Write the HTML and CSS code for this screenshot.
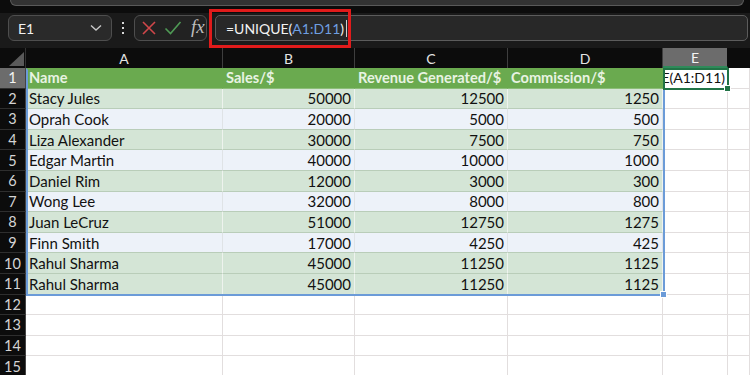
FILE: index.html
```html
<!DOCTYPE html>
<html lang="en">
	<head>
		<title>UNIQUE formula</title>
		<link rel="stylesheet" href="styles.css">
	</head>
	<body>
		<div class="title-strip">
			<div class="search-box"></div>
		</div>

		<div class="formula-bar">
			<div class="name-box">
				<span>E1</span>
				<svg width="12" height="8" viewBox="0 0 12 8"><path d="M1 1.5 L6 6 L11 1.5" fill="none" stroke="#c8c8c8" stroke-width="1.4"/></svg>
			</div>
			<div class="dots"><i></i><i></i><i></i></div>
			<div class="edit-tools">
				<svg width="16" height="16" viewBox="0 0 16 16"><path d="M2 2 L14 14 M14 2 L2 14" stroke="#d0474a" stroke-width="1.6"/></svg>
				<svg width="18" height="16" viewBox="0 0 18 16"><path d="M1.5 8.5 L6.5 13.5 L16.5 2" fill="none" stroke="#4f9a55" stroke-width="1.6"/></svg>
				<span class="fx">fx</span>
			</div>
			<div class="formula-input">
				<span>=UNIQUE(<b>A1:D11</b>)</span><i class="caret"></i>
			</div>
			<div class="callout"></div>
		</div>

		<div class="sheet">
			<div class="corner"><svg width="15" height="14" viewBox="0 0 15 14"><path d="M15 0 L15 14 L0 14 Z" fill="#5a5a5a"/></svg></div>
			<div class="col-head">A</div>
			<div class="col-head">B</div>
			<div class="col-head">C</div>
			<div class="col-head">D</div>
			<div class="col-head active">E</div>
			<div class="col-head last"></div>

			<div class="row-head active">1</div>
			<div class="cell th">Name</div>
			<div class="cell th">Sales/$</div>
			<div class="cell th">Revenue Generated/$</div>
			<div class="cell th">Commission/$</div>
			<div class="cell e1"><span>=UNIQUE(A1:D11)</span></div>
			<div class="cell"></div>

			<div class="row-head">2</div>
			<div class="cell band">Stacy Jules</div><div class="cell band num">50000</div><div class="cell band num">12500</div><div class="cell band num">1250</div><div class="cell"></div><div class="cell"></div>
			<div class="row-head">3</div>
			<div class="cell plain">Oprah Cook</div><div class="cell plain num">20000</div><div class="cell plain num">5000</div><div class="cell plain num">500</div><div class="cell"></div><div class="cell"></div>
			<div class="row-head">4</div>
			<div class="cell band">Liza Alexander</div><div class="cell band num">30000</div><div class="cell band num">7500</div><div class="cell band num">750</div><div class="cell"></div><div class="cell"></div>
			<div class="row-head">5</div>
			<div class="cell plain">Edgar Martin</div><div class="cell plain num">40000</div><div class="cell plain num">10000</div><div class="cell plain num">1000</div><div class="cell"></div><div class="cell"></div>
			<div class="row-head">6</div>
			<div class="cell band">Daniel Rim</div><div class="cell band num">12000</div><div class="cell band num">3000</div><div class="cell band num">300</div><div class="cell"></div><div class="cell"></div>
			<div class="row-head">7</div>
			<div class="cell plain">Wong Lee</div><div class="cell plain num">32000</div><div class="cell plain num">8000</div><div class="cell plain num">800</div><div class="cell"></div><div class="cell"></div>
			<div class="row-head">8</div>
			<div class="cell band">Juan LeCruz</div><div class="cell band num">51000</div><div class="cell band num">12750</div><div class="cell band num">1275</div><div class="cell"></div><div class="cell"></div>
			<div class="row-head">9</div>
			<div class="cell plain">Finn Smith</div><div class="cell plain num">17000</div><div class="cell plain num">4250</div><div class="cell plain num">425</div><div class="cell"></div><div class="cell"></div>
			<div class="row-head">10</div>
			<div class="cell band">Rahul Sharma</div><div class="cell band num">45000</div><div class="cell band num">11250</div><div class="cell band num">1125</div><div class="cell"></div><div class="cell"></div>
			<div class="row-head">11</div>
			<div class="cell band">Rahul Sharma</div><div class="cell band num">45000</div><div class="cell band num">11250</div><div class="cell band num">1125</div><div class="cell"></div><div class="cell"></div>

			<div class="row-head">12</div>
			<div class="cell"></div><div class="cell"></div><div class="cell"></div><div class="cell"></div><div class="cell"></div><div class="cell"></div>
			<div class="row-head">13</div>
			<div class="cell"></div><div class="cell"></div><div class="cell"></div><div class="cell"></div><div class="cell"></div><div class="cell"></div>
			<div class="row-head">14</div>
			<div class="cell"></div><div class="cell"></div><div class="cell"></div><div class="cell"></div><div class="cell"></div><div class="cell"></div>
			<div class="row-head">15</div>
			<div class="cell"></div><div class="cell"></div><div class="cell"></div><div class="cell"></div><div class="cell"></div><div class="cell"></div>

			<div class="selection"><i class="handle"></i></div>
			<div class="active-cell"><i class="handle"></i></div>
		</div>
	</body>
</html>
```

FILE: styles.css
```css
body {
	margin: 0;
	background: #0c0c0c;
	font-family: Lato, "Open Sans", sans-serif;
	width: 750px;
	height: 375px;
	overflow: hidden;
}
	.title-strip {
		height: 13px;
		padding: 0 6px 0 10px;
		background: #0c0c0c;
	}
	.search-box {
		height: 5px;
		border: 1px solid #5a5a5a;
		border-top: none;
		border-radius: 0 0 6px 6px;
		background: #333;
	}

	.formula-bar {
		position: relative;
		height: 35px;
		display: flex;
		align-items: flex-start;
		padding: 2px 0 0 8px;
		box-sizing: border-box;
		background: #1a1a1a;
	}
	.name-box {
		width: 104px;
		height: 26px;
		box-sizing: border-box;
		display: flex;
		align-items: center;
		justify-content: space-between;
		padding: 0 9px 0 9px;
		border: 1px solid #4e4e4e;
		border-radius: 6px;
		background: #2a2a2a;
		color: #f0f0f0;
		font-size: 14px;
	}
	.dots {
		width: 22px;
		height: 26px;
		display: flex;
		flex-direction: column;
		align-items: center;
		justify-content: center;
		gap: 3px;
	}
	.dots i {
		width: 2px;
		height: 2px;
		background: #d8d8d8;
	}
	.edit-tools {
		width: 73px;
		height: 26px;
		box-sizing: border-box;
		display: flex;
		align-items: center;
		gap: 7px;
		padding-left: 6px;
		border: 1px solid #4e4e4e;
		border-radius: 6px;
		background: #222;
	}
	.fx {
		font-family: "Liberation Serif", serif;
		font-style: italic;
		font-size: 19px;
		color: #bdbdbd;
		margin-left: 2px;
		margin-top: -2px;
	}
	.formula-input {
		flex: 1;
		height: 26px;
		box-sizing: border-box;
		margin: 0 2px 0 8px;
		display: flex;
		align-items: center;
		padding-left: 10px;
		border: 1px solid #5c5c5c;
		border-radius: 5px;
		background: #282828;
		color: #f2f2f2;
		font-size: 14px;
	}
	.formula-input b {
		font-weight: normal;
		color: #6f9fe0;
	}
	.caret {
		width: 1px;
		height: 17px;
		margin-left: 2px;
		background: #d0d0d0;
	}
	.callout {
		position: absolute;
		left: 209px;
		top: -4px;
		width: 142px;
		height: 39px;
		box-sizing: border-box;
		border: 3px solid #e01b1b;
	}

	.sheet {
		position: relative;
		display: grid;
		grid-template-columns: 26px 197px 132px 153px 155px 65px 1fr;
		grid-template-rows: 20px repeat(15, 20.6px);
		background: #fff;
	}
	.corner {
		background: #0c0c0c;
		display: flex;
		align-items: flex-end;
		justify-content: flex-end;
		padding: 0 1px 2px 0;
		border-right: 1px solid #333;
	}
	.col-head {
		background: #0c0c0c;
		color: #e4e4e4;
		font-size: 14px;
		display: flex;
		align-items: center;
		justify-content: center;
		border-right: 1px solid #3e3e3e;
	}
	.col-head.active {
		background: #6c6c6c;
		color: #f4f4f4;
		border-bottom: 2px solid #2f8a5a;
		border-right: 1px solid #0c0c0c;
	}
	.col-head.last {
		border-right: none;
	}
	.row-head {
		background: #0c0c0c;
		color: #d4d4d4;
		font-size: 14.5px;
		display: flex;
		align-items: center;
		justify-content: center;
		border-bottom: 1px solid #2e2e2e;
		border-right: 1px solid #444;
	}
	.row-head.active {
		background: #6c6c6c;
		color: #f4f4f4;
	}
	.cell {
		box-sizing: border-box;
		display: flex;
		align-items: center;
		padding: 0 3px;
		font-size: 15px;
		color: #111;
		white-space: nowrap;
		border-right: 1px solid #e2dede;
		border-bottom: 1px solid #e2dede;
		overflow: hidden;
	}
	.th {
		background: #6aaa4f;
		color: #e8f3e2;
		font-weight: bold;
		font-size: 14.6px;
		border-right-color: #6aaa4f;
		border-bottom-color: #8cbd78;
	}
	.band {
		background: #d4e5d6;
		border-right-color: #eef3ee;
		border-bottom-color: #b9cdb9;
	}
	.plain {
		background: #edf2f9;
		border-right-color: #dfe3e6;
		border-bottom-color: #b9cdb9;
	}
	.num {
		justify-content: flex-end;
	}
	.e1 {
		justify-content: flex-end;
		padding-right: 2px;
		font-size: 14px;
	}

	.selection {
		position: absolute;
		left: 26px;
		top: 20px;
		width: 639px;
		height: 228px;
		box-sizing: border-box;
		border: 2px solid #6b9bd8;
		border-top-color: transparent;
		pointer-events: none;
	}
	.active-cell {
		position: absolute;
		left: 663px;
		top: 20px;
		width: 66px;
		height: 22px;
		box-sizing: border-box;
		border: 2px solid #217346;
	}
	.handle {
		position: absolute;
		right: -4px;
		bottom: -4px;
		width: 5px;
		height: 5px;
		background: #6b9bd8;
		border: 1px solid #fff;
	}
	.active-cell .handle {
		background: #217346;
	}
```
